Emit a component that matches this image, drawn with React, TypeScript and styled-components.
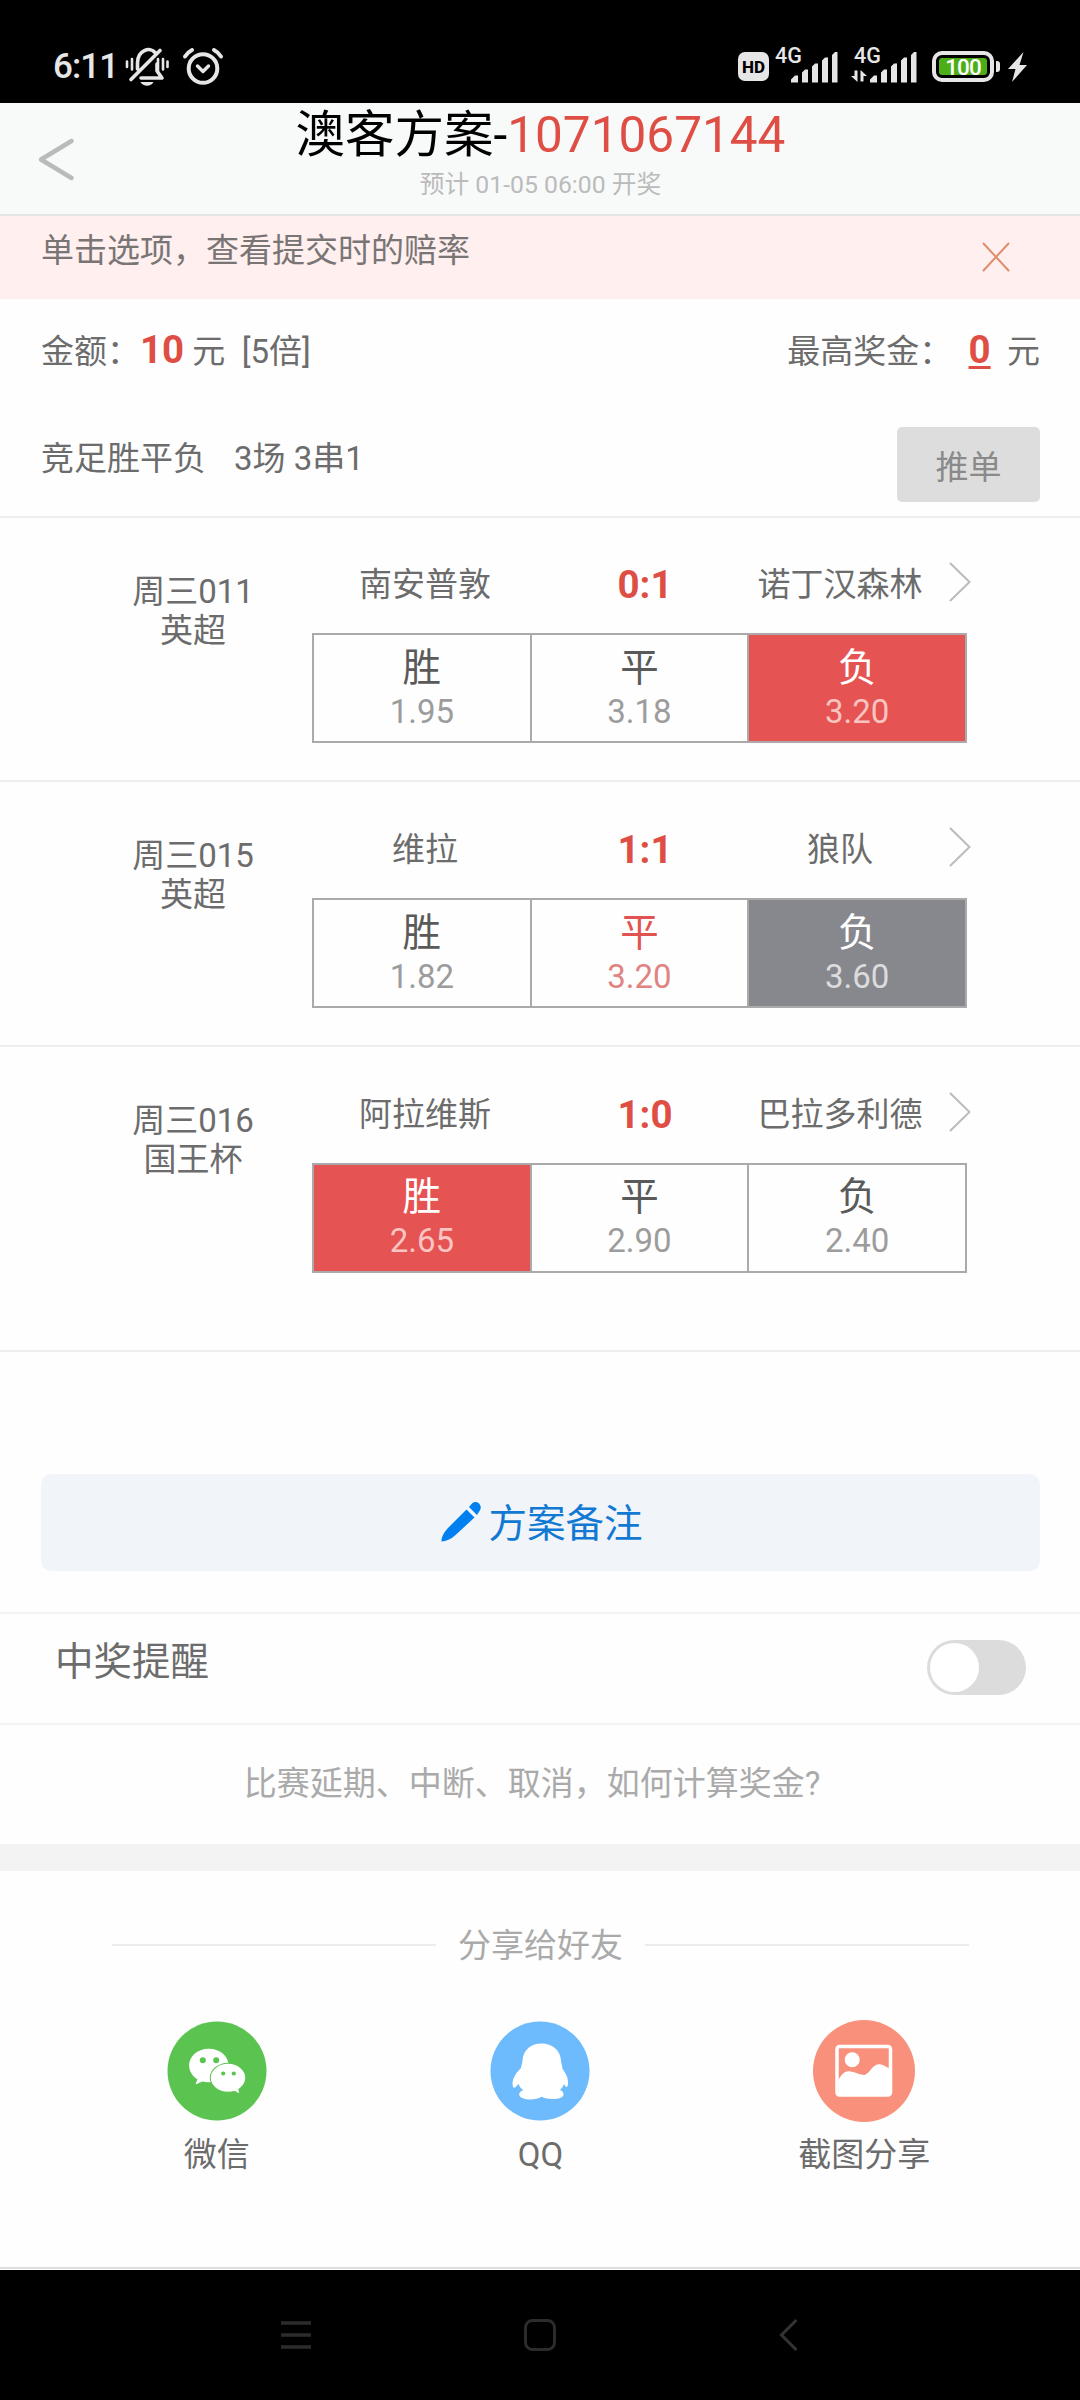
import React from 'react';
import styled, { createGlobalStyle } from 'styled-components';

const GlobalStyle = createGlobalStyle`
  * { box-sizing: border-box; }
  body { margin: 0; background: #fff; }
`;

const Page = styled.div`
  width: 1080px;
  height: 2400px;
  display: flex;
  flex-direction: column;
  overflow: hidden;
  background: #fefefe;
  color: #6c6c6c;
  font-family: Roboto, 'Noto Sans CJK SC', sans-serif;
  font-size: 33px;
  line-height: 40px;
  font-weight: 400;
  white-space: pre;
`;

/* ---------- status bar ---------- */

const StatusBar = styled.div`
  flex: none;
  height: 103px;
  padding: 30px 53px 0 53px;
  background: #000;
  color: #e6e6e6;
  display: flex;
  align-items: center;
`;

const Clock = styled.div`
  width: 72px;
  padding-top: 1px;
  font-size: 35px;
  font-weight: 500;
  letter-spacing: -0.9px;
`;

const Spacer = styled.div`
  flex: 1;
`;

const StatusIcon = styled.svg<{ $gap?: number }>`
  display: block;
  flex: none;
  overflow: visible;
  margin-left: ${(p) => p.$gap ?? 0}px;
`;

const HdBadge = styled.div`
  width: 31px;
  height: 29px;
  border-radius: 7px;
  background: #e6e6e6;
  color: #000;
  font-size: 17px;
  line-height: 30px;
  font-weight: 800;
  text-align: center;
`;

const Network = styled.div<{ $gap: number }>`
  height: 36px;
  margin-left: ${(p) => p.$gap}px;
  display: flex;
  align-items: flex-start;
`;

const NetworkType = styled.div`
  width: 27px;
  margin: -6px -12px 0 0;
  font-size: 21.5px;
  line-height: 26px;
  font-weight: 500;
`;

const Battery = styled.div`
  width: 62px;
  height: 31px;
  margin-left: 14px;
  padding: 3px;
  border: 4px solid #e6e6e6;
  border-radius: 10px;
  display: flex;
`;

const Charge = styled.div`
  flex: 1;
  border-radius: 3px;
  background: #4caf17;
  color: #fff;
  font-size: 22.5px;
  line-height: 18px;
  font-weight: 500;
  letter-spacing: -0.9px;
  text-align: center;
`;

const BatteryNub = styled.div`
  width: 4px;
  height: 11px;
  margin-left: 2px;
  border-radius: 0 3px 3px 0;
  background: #e6e6e6;
`;

/* ---------- header ---------- */

const Header = styled.header`
  flex: none;
  height: 113px;
  border-bottom: 2px solid #e3e5e6;
  background: #f8fafa;
  display: grid;
  grid-template-columns: 120px 1fr 120px;
`;

const BackIcon = styled.svg`
  margin: 34px 0 0 37px;
`;

const Titles = styled.div`
  padding: 3px 0 0 1px;
  text-align: center;
`;

const Title = styled.h1`
  margin: 0 0 7px;
  color: #000;
  font-size: 49.5px;
  line-height: 58px;
  font-weight: 400;
`;

const PlanNo = styled.span`
  color: #df4e44;
`;

const DrawTime = styled.div`
  color: #bbb;
  font-size: 24.75px;
  line-height: 28px;
`;

const Notice = styled.div`
  flex: none;
  height: 83px;
  padding: 15px 70px 0 41px;
  background: #ffefef;
  color: #7a7575;
  display: flex;
  justify-content: space-between;
`;

const CloseIcon = styled.svg`
  margin-top: 11px;
`;

/* ---------- summary ---------- */

const SummaryRow = styled.div<{ $height: number; $shift?: number }>`
  flex: none;
  height: ${(p) => p.$height}px;
  padding: ${(p) => p.$shift ?? 0}px 40px 0 41px;
  display: flex;
  align-items: center;
  justify-content: space-between;
`;

const Amount = styled.span<{ $underline?: boolean }>`
  color: #df4e44;
  font-size: 38.5px;
  line-height: 0;
  font-weight: 700;
  text-decoration: ${(p) => (p.$underline ? 'underline' : 'none')};
  text-decoration-thickness: 3px;
  text-underline-offset: 3px;
`;

const PlayType = styled.span`
  margin-right: 28px;
`;

const PushButton = styled.button`
  width: 143px;
  height: 75px;
  margin: 10px 0 0;
  padding: 7px 0 0;
  border: 0;
  border-radius: 5px;
  background: #ddd;
  color: #8a8a8a;
  font: inherit;
`;

const Divider = styled.div<{ $color?: string }>`
  flex: none;
  height: 2px;
  background: ${(p) => p.$color ?? '#eee'};
`;

/* ---------- matches ---------- */

const MatchRow = styled.section<{ $height: number }>`
  flex: none;
  height: ${(p) => p.$height}px;
  padding-left: 74px;
  border-bottom: 2px solid #eee;
  display: grid;
  grid-template-columns: 238px 655px;
`;

const MatchInfo = styled.div`
  padding-top: 54px;
  line-height: 39px;
  text-align: center;
`;

const MatchBody = styled.div`
  padding-top: 47.6px;
`;

const Teams = styled.div`
  height: 68.1px;
  display: grid;
  grid-template-columns: 226px 214px 176px 44px;
  text-align: center;
`;

const Score = styled.div`
  color: #df4e44;
  font-size: 38.5px;
  line-height: 39px;
  font-weight: 700;
`;

const Chevron = styled.svg`
  margin: -3px 0 0 21px;
`;

const OddsBox = styled.div`
  height: 110px;
  border: 2px solid #aaa;
  border-right: 0;
  display: grid;
  grid-template-columns: repeat(3, 1fr);
`;

type Tone = 'plain' | 'win' | 'hit' | 'miss';

const tones: Record<Tone, { bg: string; label: string; odds: string }> = {
  plain: { bg: 'transparent', label: '#5a5a5a', odds: '#9c9c9c' },
  win: { bg: 'transparent', label: '#e15350', odds: '#e08483' },
  hit: { bg: '#e55452', label: '#fff', odds: '#f9c4c2' },
  miss: { bg: '#87888d', label: '#fff', odds: '#dcdcde' },
};

const Cell = styled.div<{ $tone: Tone }>`
  padding-top: 10.6px;
  border-right: 2px solid #aaa;
  background: ${(p) => tones[p.$tone].bg};
  color: ${(p) => tones[p.$tone].odds};
  line-height: 43px;
  text-align: center;
`;

const Outcome = styled.div<{ $tone: Tone }>`
  color: ${(p) => tones[p.$tone].label};
  font-size: 38.5px;
  line-height: 44px;
`;

/* ---------- remark, reminder, help ---------- */

const RemarkButton = styled.button`
  flex: none;
  height: 97px;
  margin: 122px 40px 41.6px 41px;
  padding: 0 0 0 3px;
  border: 0;
  border-radius: 10px;
  background: #f1f5f9;
  color: #1279d3;
  font: inherit;
  font-size: 38.5px;
  display: flex;
  align-items: center;
  justify-content: center;
  gap: 6px;
`;

const RemarkLabel = styled.span`
  padding-top: 3px;
`;

const Reminder = styled.div`
  flex: none;
  height: 108.6px;
  padding: 0 54px 0 55px;
  font-size: 38.5px;
  display: flex;
  justify-content: space-between;
`;

const ReminderLabel = styled.div`
  padding-top: 28px;
`;

const Toggle = styled.div`
  width: 99px;
  height: 55px;
  margin-top: 26px;
  padding: 3px;
  border-radius: 28px;
  background: #dcdcdc;
`;

const Knob = styled.div`
  width: 49px;
  height: 49px;
  border-radius: 50%;
  background: #fff;
`;

const Help = styled.div`
  flex: none;
  height: 119.2px;
  padding: 39px 16px 0 0;
  color: #aaa;
  text-align: center;
`;

const Band = styled.div`
  flex: none;
  height: 27px;
  background: #f3f3f3;
`;

/* ---------- share ---------- */

const Share = styled.section`
  flex: none;
  height: 396px;
  padding-top: 53px;
`;

const ShareTitle = styled.div`
  padding: 0 111px 0 112px;
  color: #aaa;
  display: flex;
  align-items: center;
  gap: 22px;

  &::before,
  &::after {
    content: '';
    flex: 1;
    height: 2px;
    background: #ececec;
  }
`;

const ShareLabel = styled.span`
  padding-top: 2px;
`;

const ShareList = styled.div`
  padding: 54px 54px 0 55px;
  display: grid;
  grid-template-columns: repeat(3, 1fr);
`;

const ShareItem = styled.div`
  display: flex;
  flex-direction: column;
  align-items: center;
  gap: 13px;
`;

const ShareIcon = styled.svg`
  display: block;
`;

/* ---------- navigation bar ---------- */

const NavBar = styled.nav`
  flex: none;
  height: 130px;
  margin-top: 1px;
  padding: 0 281px;
  background: #000;
  display: flex;
  align-items: center;
  justify-content: space-between;
`;

const Signal = ({ data, gap }: { data?: boolean; gap: number }) => (
  <Network $gap={gap}>
    <NetworkType>4G</NetworkType>
    <StatusIcon width="49" height="36" viewBox="15 0 49 36" fill="#e6e6e6">
      <path d="M16 33.500V30.500l4-4h3v7zM27 33.500V23.500l3-3h3v13zM37 33.500V17.500l3-3h3v19zM47 33.500V11.500l3-3h3v25zM57 33.500V6l3-3h2.500v30.500z" />
      {data && <path d="M0.500 21.500h3v11.500L-3 27h3.500zM6.500 32.500V21l6.500 6H9.500v5.500z" />}
    </StatusIcon>
  </Network>
);

const WechatIcon = () => (
  <ShareIcon width="102" height="102" viewBox="-1.500 -1.500 102 102">
    <circle cx="49.500" cy="49.500" r="49.500" fill="#5bc450" />
    <path d="M31 55l-3 8 9-4z" fill="#fff" />
    <ellipse cx="41.300" cy="44" rx="19.700" ry="16.800" fill="#fff" />
    <circle cx="35.300" cy="38.700" r="3" fill="#5bc450" />
    <circle cx="48.700" cy="38.700" r="3" fill="#5bc450" />
    <ellipse cx="60.500" cy="56.300" rx="18.200" ry="15" fill="#5bc450" />
    <path d="M63 67l8.500 4.800-1.300-8z" fill="#fff" />
    <ellipse cx="60.500" cy="56.300" rx="17.200" ry="14" fill="#fff" />
    <circle cx="55.700" cy="52" r="2.100" fill="#5bc450" />
    <circle cx="66.300" cy="52" r="2.100" fill="#5bc450" />
  </ShareIcon>
);

const QqIcon = () => (
  <ShareIcon width="102" height="102" viewBox="-1.500 -1.500 102 102">
    <circle cx="49.500" cy="49.500" r="49.500" fill="#6dbafd" />
    <path
      fill="#fff"
      d="M51 22C40 22 32.500 29 32 39c0 3-1.500 5-1.500 7.500C27 50 22 56 22 62c0 2.500.6 4.300 1.800 4.200 1.500-.2 3-2.400 4.200-3.700.9 2.500 2.500 4.500 4.700 6.200-2.500.9-4.200 2.300-4 4.300.3 3.500 5.500 5 11 5 4.500 0 8.300-.8 11.300-2.700C54 77 58 77.500 62 77.500c6 0 11-1.200 11-4.700 0-2-1-3.600-3.500-4.400 2-1.600 3.200-3.600 4-5.900 1 1.500 1.800 3.300 2.700 3 1.300-.5 1.500-3.500 1.200-6.500-.5-4.500-2.900-8.500-5.400-11.500 0-3-1.500-5.500-1.500-8.500C70 29 62 22 51 22z"
    />
  </ShareIcon>
);

const PictureIcon = () => (
  <ShareIcon width="102" height="102" viewBox="0 0 102 102">
    <circle cx="51" cy="51" r="51" fill="#f8907c" />
    <rect x="24" y="26.500" width="53.500" height="48.500" rx="2.500" fill="none" stroke="#fff" strokeWidth="3.500" />
    <circle cx="39.200" cy="39.800" r="7.500" fill="#fff" />
    <path d="M25.500 60c3-6 6.500-9 10.500-8.700 5 .4 12 4 15.500 3.700 4.500-.5 8-10.500 14-10.700 4.500 0 7 2.500 11 4V75h-51z" fill="#fff" />
  </ShareIcon>
);

type Option = { name: string; odds: string; tone: Tone };
type Match = { no: string; league: string; home: string; away: string; score: string; height: number; options: Option[] };

const opts = (odds: string[], picked: Tone[]): Option[] =>
  ['胜', '平', '负'].map((name, i) => ({ name, odds: odds[i], tone: picked[i] }));

const matches: Match[] = [
  { no: '周三011', league: '英超', home: '南安普敦', away: '诺丁汉森林', score: '0:1', height: 264.8, options: opts(['1.95', '3.18', '3.20'], ['plain', 'plain', 'hit']) },
  { no: '周三015', league: '英超', home: '维拉', away: '狼队', score: '1:1', height: 264.8, options: opts(['1.82', '3.20', '3.60'], ['plain', 'win', 'miss']) },
  { no: '周三016', league: '国王杯', home: '阿拉维斯', away: '巴拉多利德', score: '1:0', height: 304.4, options: opts(['2.65', '2.90', '2.40'], ['hit', 'plain', 'plain']) },
];

export default function App() {
  return (
    <Page>
      <GlobalStyle />
      <StatusBar>
        <Clock>6:11</Clock>
        <StatusIcon width="44" height="40" viewBox="0 0 44 40" fill="none" stroke="#e6e6e6" strokeLinecap="round">
          <path d="M12.500 22v-6C12.500 3 25 -.5 30 5.500M35 3.500L6 32.500" strokeWidth="3.600" />
          <path d="M32 17v7l5 7H16" strokeWidth="3.600" strokeLinejoin="round" />
          <path d="M2 14.500v5.500M7 12v10.500M33 12v12M38 12v10.500M42.500 14.500v5.500" strokeWidth="2.600" />
          <path d="M15.500 35h13c-2.500 5-10.500 5-13 0z" fill="#e6e6e6" stroke="none" />
        </StatusIcon>
        <StatusIcon $gap={13} width="42" height="40" viewBox="0 0 42 40" fill="none" stroke="#e6e6e6" strokeLinecap="round" strokeLinejoin="round">
          <circle cx="21" cy="21.500" r="14.300" strokeWidth="4" />
          <path d="M15.500 19l5.500 5.500 5.500-5.500" strokeWidth="3.400" />
          <path d="M3 9.500Q6 5 10 3M39 9.500Q36 5 32 3" strokeWidth="4" />
        </StatusIcon>
        <Spacer />
        <HdBadge>HD</HdBadge>
        <Signal gap={6} />
        <Signal gap={15} data />
        <Battery>
          <Charge>100</Charge>
        </Battery>
        <BatteryNub />
        <StatusIcon $gap={8} width="19" height="30" viewBox="0 0 19 30" fill="#e6e6e6">
          <path d="M15.500 0L0 17h7.500L4 30l15-17h-7.500z" />
        </StatusIcon>
      </StatusBar>

      <Header>
        <BackIcon width="38" height="46" viewBox="0 0 38 46" fill="none" stroke="#b9bbbb" strokeWidth="4.500" strokeLinecap="round" strokeLinejoin="round">
          <path d="M34.500 4L4 22.500 34.500 41" />
        </BackIcon>
        <Titles>
          <Title>澳客方案-<PlanNo>1071067144</PlanNo></Title>
          <DrawTime>预计 01-05 06:00 开奖</DrawTime>
        </Titles>
      </Header>

      <Notice>
        单击选项，查看提交时的赔率
        <CloseIcon width="28" height="30" viewBox="0 0 28 30" stroke="#df8d6d" strokeWidth="2" strokeLinecap="round">
          <path d="M1.500 1.500l25 27M26.500 1.500l-25 27" />
        </CloseIcon>
      </Notice>

      <SummaryRow $height={104} $shift={2}>
        <div>金额：<Amount>10</Amount> 元{'\u00a0\u00a0'}[5倍]</div>
        <div>最高奖金：{'\u00a0\u00a0'}<Amount $underline>0</Amount>{'\u00a0\u00a0'}元</div>
      </SummaryRow>
      <SummaryRow $height={112.6}>
        <div><PlayType>竞足胜平负</PlayType>3场 3串1</div>
        <PushButton>推单</PushButton>
      </SummaryRow>
      <Divider />

      {matches.map((m) => (
        <MatchRow key={m.no} $height={m.height}>
          <MatchInfo>
            <div>{m.no}</div>
            <div>{m.league}</div>
          </MatchInfo>
          <MatchBody>
            <Teams>
              <div>{m.home}</div>
              <Score>{m.score}</Score>
              <div>{m.away}</div>
              <Chevron width="22" height="40" viewBox="0 0 22 40" fill="none" stroke="#bbb" strokeWidth="2">
                <path d="M1 1l19.500 19L1 39" />
              </Chevron>
            </Teams>
            <OddsBox>
              {m.options.map((o) => (
                <Cell key={o.name} $tone={o.tone}>
                  <Outcome $tone={o.tone}>{o.name}</Outcome>
                  {o.odds}
                </Cell>
              ))}
            </OddsBox>
          </MatchBody>
        </MatchRow>
      ))}

      <RemarkButton>
        <svg width="41" height="40" viewBox="0 0 41 40" fill="#0080f0">
          <path d="M25.500 7.500l8 8L14 33.500C10 37 5 39.500.5 39.500.5 35 3 30 6.500 26.500zM28 5l3-3.500c2-2 5-2 7 0s2.500 5 .5 7.500L36 13z" />
        </svg>
        <RemarkLabel>方案备注</RemarkLabel>
      </RemarkButton>
      <Divider $color="#f3f3f3" />
      <Reminder>
        <ReminderLabel>中奖提醒</ReminderLabel>
        <Toggle>
          <Knob />
        </Toggle>
      </Reminder>
      <Divider $color="#f3f3f3" />
      <Help>比赛延期、中断、取消，如何计算奖金?</Help>
      <Band />

      <Share>
        <ShareTitle>
          <ShareLabel>分享给好友</ShareLabel>
        </ShareTitle>
        <ShareList>
          <ShareItem>
            <WechatIcon />
            微信
          </ShareItem>
          <ShareItem>
            <QqIcon />
            QQ
          </ShareItem>
          <ShareItem>
            <PictureIcon />
            截图分享
          </ShareItem>
        </ShareList>
      </Share>
      <Divider $color="#ddd" />

      <NavBar>
        <svg width="30" height="28" viewBox="0 0 30 28" stroke="#2c2c2c" strokeWidth="3.500">
          <path d="M0 2h30M0 14h30M0 26h30" />
        </svg>
        <svg width="32" height="32" viewBox="0 0 32 32" fill="none" stroke="#2c2c2c" strokeWidth="3">
          <rect x="1.500" y="1.500" width="29" height="29" rx="7" />
        </svg>
        <svg width="30" height="32" viewBox="-10 0 30 32" fill="none" stroke="#333" strokeWidth="3">
          <path d="M17.500 1L2.500 16l15 15" />
        </svg>
      </NavBar>
    </Page>
  );
}
